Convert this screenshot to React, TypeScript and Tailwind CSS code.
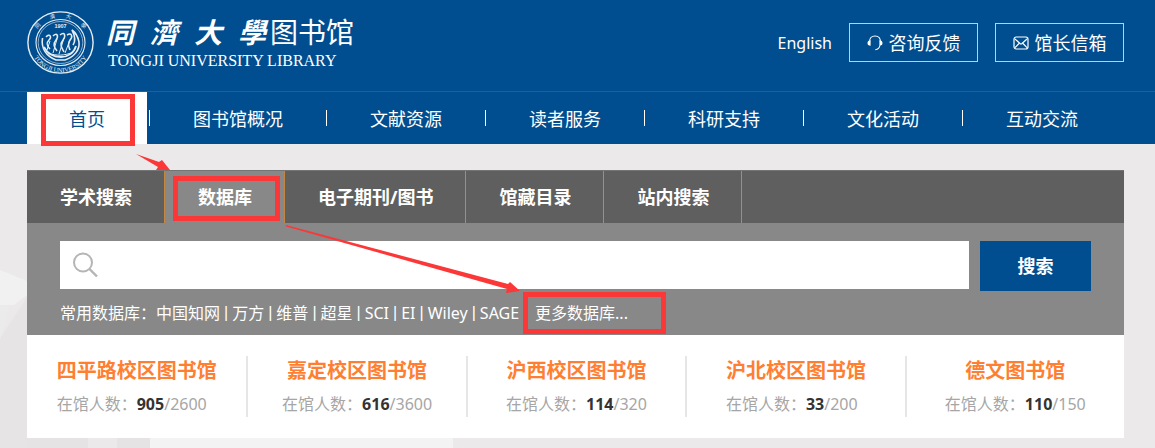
import * as React from 'react'

const navItems = ['图书馆概况', '文献资源', '读者服务', '科研支持', '文化活动', '互动交流']

const tabs = ['学术搜索', '数据库', '电子期刊/图书', '馆藏目录', '站内搜索']

const databases = ['中国知网', '万方', '维普', '超星', 'SCI', 'EI', 'Wiley', 'SAGE']

const libraries = [
  { name: '四平路校区图书馆', current: 905, total: 2600 },
  { name: '嘉定校区图书馆', current: 616, total: 3600 },
  { name: '沪西校区图书馆', current: 114, total: 320 },
  { name: '沪北校区图书馆', current: 33, total: 200 },
  { name: '德文图书馆', current: 110, total: 150 },
]

// 校徽
const Seal: React.FC = () => (
  <svg className="w-[67px] h-[63px] shrink-0" viewBox="0 0 67 63" fill="none" stroke="#e6eef5" aria-hidden="true">
    <defs>
      <path id="seal-bottom" d="M3.500 33 A30 28.500 0 0 0 63.500 33" />
    </defs>
    <ellipse cx="33.5" cy="31.5" rx="32.6" ry="30.6" strokeWidth="1.4" />
    <ellipse cx="33.5" cy="31.5" rx="24.5" ry="23" strokeWidth="1.1" />
    <ellipse cx="33.5" cy="31.5" rx="22.3" ry="21" strokeWidth="0.6" />
    <g fill="#e6eef5" stroke="none" fontFamily="Liberation Serif, Noto Sans CJK SC, serif">
      <text fontSize="6.5">
        <textPath href="#seal-bottom" startOffset="50%" textAnchor="middle">TONGJI UNIVERSITY</textPath>
      </text>
      <g fontSize="5.5" textAnchor="middle">
        <text transform="translate(12 16) rotate(-48)">同</text>
        <text transform="translate(26 7.500) rotate(-16)">濟</text>
        <text transform="translate(41 7.500) rotate(16)">大</text>
        <text transform="translate(55 16) rotate(48)">學</text>
      </g>
      <text x="33.5" y="17" fontSize="5.5" fontWeight="bold" textAnchor="middle" fontFamily="Liberation Sans, sans-serif">1907</text>
    </g>
    {/* 龙舟 */}
    <path d="M15.5 27 C14 37 19 45 29 49 L38 49 C47 46 53 39 52 31 C51 26 49 22 45 19 C48 25 49 30 46 34" strokeWidth="1.6" />
    <path d="M17 36 C21 44 28 46 34 46 C41 46 47 42 49 35" strokeWidth="1.8" />
    <path d="M19 26 c4 -4 6 0 3 3 c-4 4 -1 7 1 9 M26 25 c4 -4 6 0 3 4 c-4 5 -1 8 1 11 M33 24 c5 -4 6 1 3 5 c-4 5 -1 8 1 12 M40 24 c5 -3 6 2 3 5 c-3 5 -1 7 0 10" strokeWidth="1.5" />
    <path d="M20 39 l3 -9 M26 42 l4 -14 M32 43 l5 -16 M38 42 l5 -13 M21 42 c8 3 17 3 25 -1" strokeWidth="1" />
  </svg>
)

const HeadsetIcon: React.FC = () => (
  <svg className="w-4 h-4" viewBox="0 0 16 16" fill="none" stroke="white" strokeWidth="1.1" aria-hidden="true">
    <path d="M2.5 7 C2.5 3 5 1 8 1 S13.5 3 13.5 7" />
    <path d="M3.6 5.2 v5.6 C1.5 10.8 0.5 9.7 0.5 8 S1.5 5.2 3.6 5.2Z M12.4 5.2 v5.6 C14.5 10.8 15.5 9.7 15.5 8 S14.5 5.2 12.4 5.2Z" fill="white" stroke="none" />
    <path d="M12.8 10.5 C12.5 13 11 14.3 8.3 14.7" />
  </svg>
)

const MailIcon: React.FC = () => (
  <svg className="w-4 h-4" viewBox="0 0 16 16" fill="none" stroke="white" strokeWidth="1.2" aria-hidden="true">
    <rect x="1" y="2" width="14" height="12" rx="2.2" />
    <path d="M2 4 L7 8.5 Q8 9.3 9 8.5 L14 4 M2 12.7 L6 8.5 M14 12.7 L10 8.5" />
  </svg>
)

const SearchIcon: React.FC = () => (
  <svg className="w-[26px] h-[26px]" viewBox="0 0 26 26" fill="none" stroke="#b5b5b5" strokeWidth="2" aria-hidden="true">
    <circle cx="11" cy="10.5" r="9" />
    <path d="M17.5 17 L25 24.5" strokeWidth="2.4" />
  </svg>
)

// 褪色的背景建筑
const Backdrop: React.FC = () => (
  <svg className="absolute left-0 bottom-0 w-[460px] h-[220px]" viewBox="0 0 460 220" aria-hidden="true">
    <path d="M0 110 L27 70 V220 H0Z" fill="#e6e4e5" />
    <path d="M0 42 L27 53 V67 L14 77 H0Z" fill="#f2f1f1" />
    <path d="M0 77 H10 L0 112Z" fill="#ecebeb" />
    <rect x="27" y="205" width="123" height="15" fill="#e5e3e4" />
    <rect x="88" y="205" width="29" height="15" fill="#ebe9ea" />
    <rect x="150" y="205" width="303" height="15" fill="#f3f3f3" />
  </svg>
)

const Header: React.FC = () => (
  <header className="relative bg-[#004e90] text-white">
    <div className="flex items-start justify-between pl-[27px] pr-[31px] pt-[11px] h-[91px]">
      <a href="#" className="flex gap-3">
        <Seal />
        <span className="flex flex-col">
          <span className="flex items-center text-[28px] leading-[42px]">
            <span className="flex gap-4 italic font-bold">
              <span>同</span>
              <span>濟</span>
              <span>大</span>
              <span>學</span>
            </span>
            <span className="pl-1">图书馆</span>
          </span>
          <span className="pl-[2px] font-['Liberation_Serif',serif] text-base leading-4">TONGJI UNIVERSITY LIBRARY</span>
        </span>
      </a>
      <div className="flex items-center pt-3 gap-[17px]">
        <a href="#" className="text-base">English</a>
        <a href="#" className="flex items-center justify-center gap-1.5 w-[129px] h-[39px] border border-[#bcd0e2] text-lg">
          <HeadsetIcon />
          咨询反馈
        </a>
        <a href="#" className="flex items-center justify-center gap-1.5 w-[129px] h-[39px] border border-[#bcd0e2] text-lg">
          <MailIcon />
          馆长信箱
        </a>
      </div>
    </div>
    <nav className="flex items-center pl-[27px] border-t border-[#1d609b] text-lg">
      <a href="#" className="relative mr-px px-[42px] h-[52px] leading-[54px] bg-white text-[#004e90]">
        首页
        <span className="absolute left-3.5 right-3 top-0.5 -bottom-0.5 z-10 border-5 border-[#fc3737]" />
      </a>
      {navItems.map(item => (
        <React.Fragment key={item}>
          <span className="mx-px w-px h-4 bg-white" />
          <a href="#" className="px-[42px] h-[52px] leading-[54px]">{item}</a>
        </React.Fragment>
      ))}
    </nav>
  </header>
)

const Arrows: React.FC = () => (
  <svg className="absolute left-[100px] -top-5 z-10 w-[400px] h-[150px] pointer-events-none" viewBox="127 150 400 150" fill="#fc3737" aria-hidden="true">
    <path d="M136 154 L159 162 L162 160 L170 170 L156 170 L158 167Z" />
    <path d="M286 225 L508 284 L510 282 L520 291 L506 293 L507 289 L286 226.5Z" />
  </svg>
)

const SearchPanel: React.FC = () => {
  const [active, setActive] = React.useState('数据库')

  return (
    <section className="relative bg-[#888888] text-white">
      <Arrows />
      <div className="flex h-[53px] bg-[#5f5f5f] border-t border-[#747474]">
        {tabs.map(tab => (
          <button
            key={tab}
            type="button"
            onClick={() => setActive(tab)}
            className={`relative pl-[33px] pr-8 border-r border-[#c4873f] text-lg font-bold ${tab === active ? 'bg-[#888888]' : ''}`}
          >
            {tab}
            {tab === '数据库' && <span className="absolute left-2 right-1 top-[5px] bottom-0.5 border-5 border-[#fc3737]" />}
          </button>
        ))}
      </div>
      <div className="px-[33px] pt-[18px] pb-1">
        <form className="flex items-start gap-[11px]" onSubmit={e => e.preventDefault()}>
          <label className="flex flex-1 items-center gap-2 h-12 px-3 bg-white">
            <SearchIcon />
            <input type="text" aria-label="搜索" className="flex-1 min-w-0 text-[#333333] outline-none" />
          </label>
          <button type="submit" className="w-[111px] h-[50px] bg-[#004e90] text-lg font-bold">搜索</button>
        </form>
        <div className="flex items-center h-10 pt-1 text-base whitespace-nowrap">
          <span>常用数据库：</span>
          {databases.map((db, i) => (
            <React.Fragment key={db}>
              {i > 0 && <span className="px-1 font-['Liberation_Sans',sans-serif]">|</span>}
              <a href="#">{db}</a>
            </React.Fragment>
          ))}
          <a href="#" className="relative ml-4">
            更多数据库...
            <span className="absolute -left-3 -top-[9px] w-[143px] h-[42px] border-5 border-[#fc3737]" />
          </a>
        </div>
      </div>
    </section>
  )
}

const LibraryStats: React.FC = () => (
  <section className="grid grid-cols-5 bg-white py-[21px]">
    {libraries.map(lib => (
      <div key={lib.name} className="flex justify-center h-[61px] border-l-2 border-[#e6e6e6] first:border-l-0">
        <div className="flex flex-col">
          <a href="#" className="self-center text-xl leading-[30px] font-bold text-[#ff7f32]">{lib.name}</a>
          <p className="pt-1.5 text-base leading-6 text-[#a6a6a6]">
            在馆人数：
            <b className="text-[#333333]">{lib.current}</b>
            /
            {lib.total}
          </p>
        </div>
      </div>
    ))}
  </section>
)

const App: React.FC = () => (
  <div className="relative min-h-screen bg-[#ebe9ea] font-['Noto_Sans','Noto_Sans_CJK_SC',sans-serif]">
    <Backdrop />
    <Header />
    <main className="relative pl-[27px] pr-[31px] pt-[26px] pb-2.5">
      <SearchPanel />
      <LibraryStats />
    </main>
  </div>
)

export default App
